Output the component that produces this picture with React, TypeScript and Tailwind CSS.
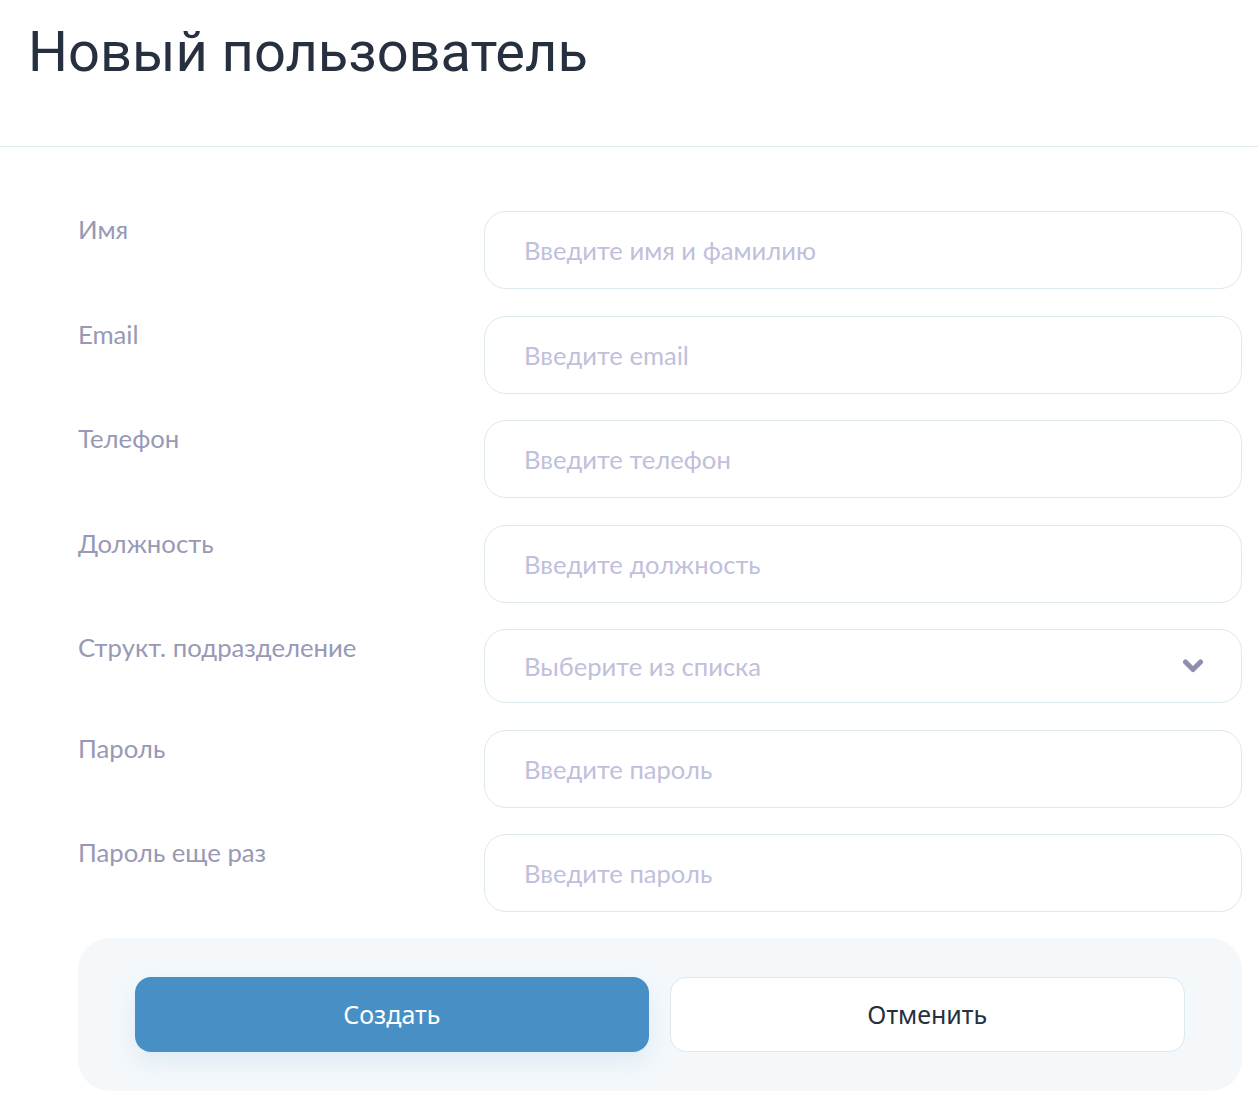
const fields = [
  { label: "Имя", placeholder: "Введите имя и фамилию", type: "text" },
  { label: "Email", placeholder: "Введите email", type: "email" },
  { label: "Телефон", placeholder: "Введите телефон", type: "tel" },
  { label: "Должность", placeholder: "Введите должность", type: "text" },
  { label: "Структ. подразделение", placeholder: "Выберите из списка", type: "select" },
  { label: "Пароль", placeholder: "Введите пароль", type: "password" },
  { label: "Пароль еще раз", placeholder: "Введите пароль", type: "password" },
];

function Chevron() {
  return (
    <svg width="22" height="16" viewBox="0 0 22 16" fill="none" className="text-[#8e8fb0]">
      <path d="M3.5 4 L11 11.5 L18.5 4" stroke="currentColor" strokeWidth="5" strokeLinecap="round" strokeLinejoin="round" />
    </svg>
  );
}

export default function App() {
  return (
    <div className="min-h-[1104px] bg-white">
      <div className="h-[147px] border-b border-[#dfecf1] pl-[28px] pt-[14px]">
        <h1 className="font-['Roboto',sans-serif] text-[56px] leading-[76px] text-[#26303f]">
          Новый пользователь
        </h1>
      </div>

      <div className="pl-[78px] pr-[16px] pt-[64px]">
        <div className="flex flex-col gap-[26.5px]">
          {fields.map((f) => (
            <div key={f.label} className="flex items-start">
              <label className="w-[406px] shrink-0 pt-[3px] font-['Lato',sans-serif] text-[25.7px] leading-[30px] text-[#9799b5]">
                {f.label}
              </label>
              {f.type === "select" ? (
                <div className="flex h-[74px] flex-1 items-center justify-between rounded-[22px] border border-[#dce9ee] pl-[39px] pr-[37px] font-['Lato',sans-serif] text-[25.6px] text-[#bfc0dc]">
                  <span>{f.placeholder}</span>
                  <Chevron />
                </div>
              ) : (
                <input
                  type={f.type}
                  placeholder={f.placeholder}
                  className="h-[78px] flex-1 rounded-[22px] border border-[#dce9ee] bg-white pl-[39px] font-['Lato',sans-serif] text-[25.6px] text-[#26303f] outline-none placeholder:text-[#bfc0dc]"
                />
              )}
            </div>
          ))}
        </div>

        <div className="mt-[26px] flex gap-[21px] rounded-[32px] bg-[#f4f8fb] px-[57px] py-[39px]">
          <button className="h-[75px] flex-1 rounded-[16px] bg-[#478fc5] font-['Noto_Sans',sans-serif] text-[25px] text-white shadow-[0_10px_24px_rgba(71,143,197,0.12)]">
            Создать
          </button>
          <button className="h-[75px] flex-1 rounded-[16px] border border-[#dce9ee] bg-white font-['Noto_Sans',sans-serif] text-[25px] text-[#26303f]">
            Отменить
          </button>
        </div>
      </div>
    </div>
  );
}
